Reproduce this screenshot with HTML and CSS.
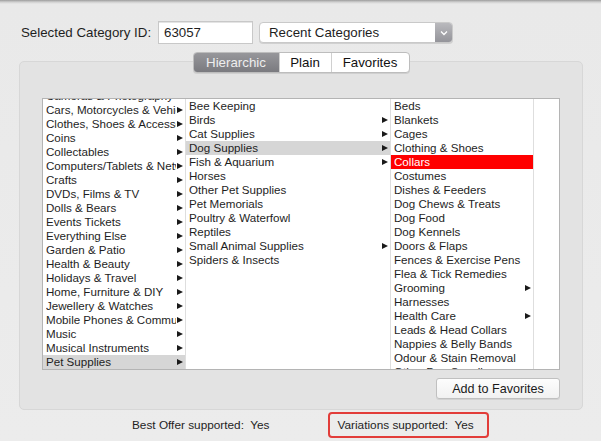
FILE: index.html
```html
<!DOCTYPE html>
<html lang="en">
<head>
    <meta charset="UTF-8">
    <title>Category Browser</title>
    <link rel="stylesheet" href="styles.css">
</head>
<body>
    <div class="window">
        <div class="top-row">
            <span class="top-label">Selected Category ID:</span>
            <div class="id-field">63057</div>
            <div class="popup">
                <span class="popup-text">Recent Categories</span>
                <span class="popup-arrow">
                    <svg width="8" height="6" viewBox="0 0 8 6"><polyline points="1,1.5 4,4.5 7,1.5" fill="none" stroke="#fff" stroke-width="1.3"/></svg>
                </span>
            </div>
        </div>

        <div class="group">
            <div class="segments">
                <span class="segment selected">Hierarchic</span>
                <span class="segment">Plain</span>
                <span class="segment">Favorites</span>
            </div>

            <div class="browser">
                <div class="column col-1">
                    <div class="list scrolled">
                        <div class="row sub"><span class="name">Cameras &amp; Photography</span></div>
                        <div class="row sub"><span class="name">Cars, Motorcycles &amp; Vehicles</span></div>
                        <div class="row sub"><span class="name">Clothes, Shoes &amp; Accessories</span></div>
                        <div class="row sub"><span class="name">Coins</span></div>
                        <div class="row sub"><span class="name">Collectables</span></div>
                        <div class="row sub"><span class="name">Computers/Tablets &amp; Networking</span></div>
                        <div class="row sub"><span class="name">Crafts</span></div>
                        <div class="row sub"><span class="name">DVDs, Films &amp; TV</span></div>
                        <div class="row sub"><span class="name">Dolls &amp; Bears</span></div>
                        <div class="row sub"><span class="name">Events Tickets</span></div>
                        <div class="row sub"><span class="name">Everything Else</span></div>
                        <div class="row sub"><span class="name">Garden &amp; Patio</span></div>
                        <div class="row sub"><span class="name">Health &amp; Beauty</span></div>
                        <div class="row sub"><span class="name">Holidays &amp; Travel</span></div>
                        <div class="row sub"><span class="name">Home, Furniture &amp; DIY</span></div>
                        <div class="row sub"><span class="name">Jewellery &amp; Watches</span></div>
                        <div class="row sub"><span class="name">Mobile Phones &amp; Communication</span></div>
                        <div class="row sub"><span class="name">Music</span></div>
                        <div class="row sub"><span class="name">Musical Instruments</span></div>
                        <div class="row sub path"><span class="name">Pet Supplies</span></div>
                    </div>
                </div>
                <div class="column col-2">
                    <div class="list">
                        <div class="row"><span class="name">Bee Keeping</span></div>
                        <div class="row sub"><span class="name">Birds</span></div>
                        <div class="row sub"><span class="name">Cat Supplies</span></div>
                        <div class="row sub path"><span class="name">Dog Supplies</span></div>
                        <div class="row sub"><span class="name">Fish &amp; Aquarium</span></div>
                        <div class="row"><span class="name">Horses</span></div>
                        <div class="row"><span class="name">Other Pet Supplies</span></div>
                        <div class="row"><span class="name">Pet Memorials</span></div>
                        <div class="row"><span class="name">Poultry &amp; Waterfowl</span></div>
                        <div class="row"><span class="name">Reptiles</span></div>
                        <div class="row sub"><span class="name">Small Animal Supplies</span></div>
                        <div class="row"><span class="name">Spiders &amp; Insects</span></div>
                    </div>
                </div>
                <div class="column col-3">
                    <div class="list">
                        <div class="row"><span class="name">Beds</span></div>
                        <div class="row"><span class="name">Blankets</span></div>
                        <div class="row"><span class="name">Cages</span></div>
                        <div class="row"><span class="name">Clothing &amp; Shoes</span></div>
                        <div class="row current"><span class="name">Collars</span></div>
                        <div class="row"><span class="name">Costumes</span></div>
                        <div class="row"><span class="name">Dishes &amp; Feeders</span></div>
                        <div class="row"><span class="name">Dog Chews &amp; Treats</span></div>
                        <div class="row"><span class="name">Dog Food</span></div>
                        <div class="row"><span class="name">Dog Kennels</span></div>
                        <div class="row"><span class="name">Doors &amp; Flaps</span></div>
                        <div class="row"><span class="name">Fences &amp; Exercise Pens</span></div>
                        <div class="row"><span class="name">Flea &amp; Tick Remedies</span></div>
                        <div class="row sub"><span class="name">Grooming</span></div>
                        <div class="row"><span class="name">Harnesses</span></div>
                        <div class="row sub"><span class="name">Health Care</span></div>
                        <div class="row"><span class="name">Leads &amp; Head Collars</span></div>
                        <div class="row"><span class="name">Nappies &amp; Belly Bands</span></div>
                        <div class="row"><span class="name">Odour &amp; Stain Removal</span></div>
                        <div class="row"><span class="name">Other Dog Supplies</span></div>
                    </div>
                </div>
                <div class="column col-4"></div>
            </div>

            <div class="button-row">
                <button class="push-button">Add to Favorites</button>
            </div>
        </div>

        <div class="status-row">
            <span class="status">Best Offer supported:&nbsp; Yes</span>
            <span class="status marked">Variations supported:&nbsp; Yes</span>
        </div>
    </div>
</body>
</html>
```

FILE: styles.css
```css
body {
    margin: 0;
    padding: 0;
    font-family: "Liberation Sans", Arial, sans-serif;
    color: #1e1e1e;
    background-color: #ececec;
}

.window {
    width: 601px;
    height: 441px;
    overflow: hidden;
    background: linear-gradient(#9c9c9c, #cfcfcf 2px, #e9e9e9 4px, #ececec);
}

/* top row */

.top-row {
    display: flex;
    align-items: center;
    padding: 21px 0 0 21px;
    height: 23px;
    font-size: 13.3px;
}

.top-label {
    width: 137px;
}

.id-field {
    box-sizing: border-box;
    width: 95px;
    height: 23px;
    padding: 3px 0 0 5px;
    background: #fff;
    border: 1px solid #c8c8c8;
    box-shadow: inset 0 1px 0 #e4e4e4;
}

.popup {
    box-sizing: border-box;
    display: flex;
    align-items: center;
    width: 194px;
    height: 21px;
    margin-left: 6px;
    background: #fff;
    border: 1px solid #c9c9c9;
    border-radius: 4px;
    box-shadow: 0 1px 0 #d0d0d0;
    overflow: hidden;
}

.popup-text {
    flex: 1;
    padding-left: 9px;
}

.popup-arrow {
    display: flex;
    align-items: center;
    justify-content: center;
    width: 17px;
    height: 100%;
    background: linear-gradient(#b9b9bd, #94949a);
}

/* group box */

.group {
    box-sizing: border-box;
    width: 564px;
    height: 349px;
    margin: 17px 0 0 19px;
    background: #e3e3e3;
    border: 1px solid #d7d7d7;
    border-radius: 5px;
}

.segments {
    display: flex;
    width: 217px;
    height: 21px;
    margin: -10px auto 0;
    box-sizing: border-box;
    border: 1px solid #bdbdbd;
    border-radius: 4px;
    background: #fff;
    overflow: hidden;
    font-size: 13.3px;
    box-shadow: 0 1px 0 #cfcfcf;
}

.segment {
    display: flex;
    align-items: center;
    justify-content: center;
    color: #111;
    border-left: 1px solid #d0d0d0;
}

.segment:nth-child(1) { width: 85px; border-left: none; }
.segment:nth-child(2) { width: 51px; }
.segment:nth-child(3) { flex: 1; }

.segment.selected {
    color: #eeeeee;
    background: linear-gradient(#97979b, #7a7a7f);
}

/* column browser */

.browser {
    display: flex;
    box-sizing: border-box;
    width: 518px;
    height: 272px;
    margin: 25px 0 0 22px;
    background: #fff;
    border: 1px solid #b4b4b4;
    font-size: 11.6px;
}

.column {
    overflow: hidden;
    border-right: 1px solid #dedede;
}

.col-1 { width: 142px; }
.col-2 { width: 204px; }
.col-3 { width: 142px; }
.col-4 { flex: 1; border-right: none; }

.list.scrolled {
    margin-top: -10px;
}

.row {
    display: flex;
    align-items: center;
    height: 14px;
    line-height: 14px;
    padding-left: 3px;
}

.name {
    flex: 1;
    white-space: nowrap;
    overflow: hidden;
}

.row.sub::after {
    content: "";
    flex: none;
    width: 0;
    height: 0;
    margin: 0 2px 0 1px;
    border-left: 6px solid #1a1a1a;
    border-top: 3.5px solid transparent;
    border-bottom: 3.5px solid transparent;
}

.row.path {
    background: #d6d6d6;
}

.row.current {
    background: #ff0000;
    color: #fff;
}

/* button */

.button-row {
    display: flex;
    justify-content: flex-end;
    width: 540px;
    margin-top: 8px;
}

.push-button {
    box-sizing: border-box;
    width: 124px;
    height: 21px;
    padding: 0;
    font-family: "Liberation Sans", Arial, sans-serif;
    font-size: 12.6px;
    color: #1a1a1a;
    background: linear-gradient(#fdfdfd, #f1f1f1);
    border: 1px solid #c0c0c0;
    border-radius: 3px;
    box-shadow: 0 1px 0 #d2d2d2;
}

/* status line */

.status-row {
    display: flex;
    align-items: center;
    margin-top: 2px;
    padding-left: 132px;
    font-size: 11.8px;
}

.status {
    line-height: 22px;
}

.status.marked {
    margin-left: 58px;
    padding: 0 13px 0 8px;
    border: 2px solid #e23d3a;
    border-radius: 4px;
}
```
